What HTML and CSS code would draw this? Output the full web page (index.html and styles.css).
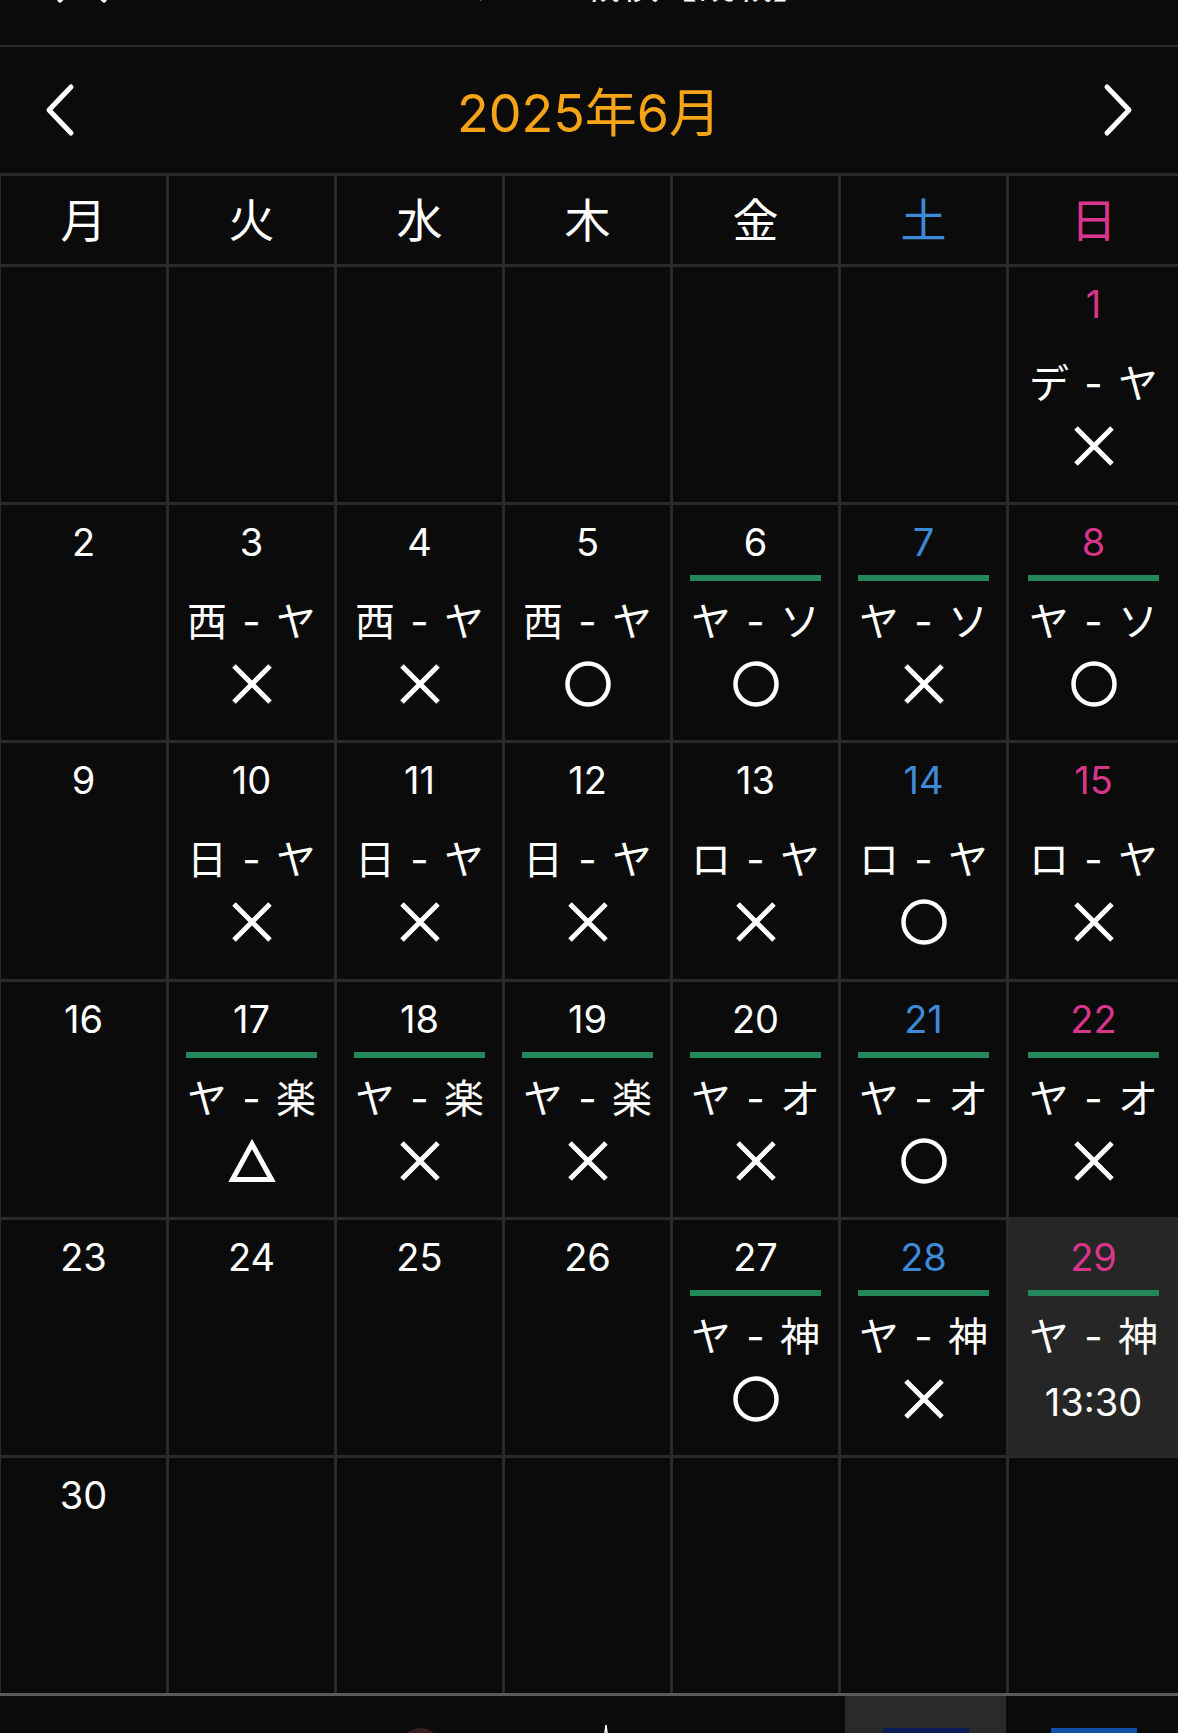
FILE: index.html
```html
<!DOCTYPE html>
<html lang="ja">
<head>
    <meta charset="UTF-8" />
    <meta name="viewport" content="width=device-width, initial-scale=1" />
    <title>観戦カレンダー</title>
    <link rel="stylesheet" href="styles.css">
</head>
<body>
    <div class="top-bar">
        <svg class="close-icon" width="52" height="52" viewBox="0 0 52 52">
            <path d="M4 4L48 48M48 4L4 48" stroke="#fff" stroke-width="5" stroke-linecap="round" />
        </svg>
        <span class="top-title">ヤクルト戦績【観戦】</span>
    </div>

    <div class="month-nav">
        <button class="nav-btn" aria-label="前の月">
            <svg width="31" height="54" viewBox="0 0 31 54">
                <path d="M27 4L5 27L27 50" fill="none" stroke="#fff" stroke-width="5" stroke-linecap="round" stroke-linejoin="round" />
            </svg>
        </button>
        <h1 class="month-title">2025年6月</h1>
        <button class="nav-btn" aria-label="次の月">
            <svg width="31" height="54" viewBox="0 0 31 54">
                <path d="M4 4L26 27L4 50" fill="none" stroke="#fff" stroke-width="5" stroke-linecap="round" stroke-linejoin="round" />
            </svg>
        </button>
    </div>

    <div class="calendar" id="calendar">
        <div class="weekday">月</div>
        <div class="weekday">火</div>
        <div class="weekday">水</div>
        <div class="weekday">木</div>
        <div class="weekday">金</div>
        <div class="weekday sat">土</div>
        <div class="weekday sun">日</div>
    </div>

    <div class="tab-bar">
        <div class="tab"></div>
        <div class="tab"></div>
        <div class="tab"><span class="tab-ball"></span></div>
        <div class="tab">
            <svg class="tab-pen" width="40" height="30" viewBox="0 0 40 30">
                <path d="M37 2L35.5 14M37 2L38.5 14" stroke="#fff" stroke-width="1.5" fill="none" />
            </svg>
        </div>
        <div class="tab"></div>
        <div class="tab active"><span class="tab-flag navy"></span></div>
        <div class="tab"><span class="tab-flag blue"></span></div>
    </div>

    <script>
        const marks = {
            x: '<svg width="42" height="42" viewBox="0 0 42 42"><path d="M3 3L39 39M39 3L3 39" stroke="#fff" stroke-width="5"/></svg>',
            o: '<svg width="46" height="46" viewBox="0 0 46 46"><circle cx="23" cy="23" r="20.5" fill="none" stroke="#fff" stroke-width="4.5"/></svg>',
            t: '<svg width="48" height="43" viewBox="0 0 48 43"><path d="M24 5L43.5 40.5H4.5Z" fill="none" stroke="#fff" stroke-width="5"/></svg>'
        };

        // June 2025 starts on a Sunday, grid starts on Monday
        const days = [
            { d: 1, vs: 'デ - ヤ', res: 'x' },
            { d: 2 },
            { d: 3, vs: '西 - ヤ', res: 'x' },
            { d: 4, vs: '西 - ヤ', res: 'x' },
            { d: 5, vs: '西 - ヤ', res: 'o' },
            { d: 6, vs: 'ヤ - ソ', res: 'o', home: true },
            { d: 7, vs: 'ヤ - ソ', res: 'x', home: true },
            { d: 8, vs: 'ヤ - ソ', res: 'o', home: true },
            { d: 9 },
            { d: 10, vs: '日 - ヤ', res: 'x' },
            { d: 11, vs: '日 - ヤ', res: 'x' },
            { d: 12, vs: '日 - ヤ', res: 'x' },
            { d: 13, vs: 'ロ - ヤ', res: 'x' },
            { d: 14, vs: 'ロ - ヤ', res: 'o' },
            { d: 15, vs: 'ロ - ヤ', res: 'x' },
            { d: 16 },
            { d: 17, vs: 'ヤ - 楽', res: 't', home: true },
            { d: 18, vs: 'ヤ - 楽', res: 'x', home: true },
            { d: 19, vs: 'ヤ - 楽', res: 'x', home: true },
            { d: 20, vs: 'ヤ - オ', res: 'x', home: true },
            { d: 21, vs: 'ヤ - オ', res: 'o', home: true },
            { d: 22, vs: 'ヤ - オ', res: 'x', home: true },
            { d: 23 },
            { d: 24 },
            { d: 25 },
            { d: 26 },
            { d: 27, vs: 'ヤ - 神', res: 'o', home: true },
            { d: 28, vs: 'ヤ - 神', res: 'x', home: true },
            { d: 29, vs: 'ヤ - 神', time: '13:30', home: true, today: true },
            { d: 30 }
        ];

        function addCell(calendar, day, col) {
            const cell = document.createElement('div');
            cell.className = 'cell';
            if (day && day.today) cell.classList.add('today');
            if (day) {
                const num = document.createElement('span');
                num.className = 'day';
                if (col === 5) num.classList.add('sat');
                if (col === 6) num.classList.add('sun');
                num.textContent = day.d;
                cell.appendChild(num);

                if (day.vs) {
                    const bar = document.createElement('span');
                    bar.className = day.home ? 'bar' : 'bar none';
                    cell.appendChild(bar);

                    const vs = document.createElement('span');
                    vs.className = 'match';
                    vs.textContent = day.vs;
                    cell.appendChild(vs);

                    const res = document.createElement('span');
                    if (day.time) {
                        res.className = 'time';
                        res.textContent = day.time;
                    } else {
                        res.className = 'mark';
                        res.innerHTML = marks[day.res];
                    }
                    cell.appendChild(res);
                }
            }
            calendar.appendChild(cell);
        }

        const calendar = document.getElementById('calendar');
        const cells = [0, 0, 0, 0, 0, 0].map(() => null).concat(days);
        while (cells.length < 42) cells.push(null);
        cells.forEach((day, i) => addCell(calendar, day, i % 7));
    </script>
</body>
</html>
```

FILE: styles.css
```css
body {
    margin: 0;
    background: #0b0b0b;
    color: #fff;
    font-family: Inter, "Noto Sans CJK JP", sans-serif;
    overflow: hidden;
}
.top-bar {
    height: 45px;
    border-bottom: 2px solid #2c2c2c;
    display: flex;
    align-items: flex-start;
    overflow: hidden;
}
.close-icon {
    margin: -48px 0 0 56px;
    flex-shrink: 0;
}
.top-title {
    margin: -36px 0 0 324px;
    font-size: 38px;
    line-height: 40px;
    white-space: nowrap;
}
.month-nav {
    height: 126px;
    display: flex;
    align-items: center;
    justify-content: space-between;
    padding: 0 44px;
}
.nav-btn {
    background: none;
    border: none;
    padding: 0;
    width: 31px;
    height: 54px;
    display: flex;
    cursor: pointer;
}
.month-title {
    margin: 0;
    padding-bottom: 2px;
    font-size: 52px;
    font-weight: 400;
    color: #f4a416;
}
.calendar {
    display: grid;
    grid-template-columns: repeat(6, 165px) 1fr;
    grid-template-rows: 88px repeat(6, 235.2px);
    gap: 3px;
    padding: 3px 0 0 1px;
    background: #2a2a2a;
}
.weekday {
    background: #0b0b0b;
    display: flex;
    align-items: center;
    justify-content: center;
    padding-bottom: 6px;
    font-size: 46px;
}
.sat {
    color: #3d8ad9;
}
.sun {
    color: #d9368b;
}
.cell {
    background: #0b0b0b;
    display: flex;
    flex-direction: column;
    align-items: center;
    padding-top: 15px;
}
.cell.today {
    background: #262626;
}
.day {
    font-size: 38px;
    line-height: 44px;
}
.bar {
    width: 131px;
    height: 6px;
    margin-top: 11px;
    background: #23895a;
}
.bar.none {
    background: transparent;
}
.match {
    font-size: 40px;
    line-height: 46px;
    margin: 18px 0 0 2px;
    letter-spacing: 2px;
    white-space: nowrap;
}
.mark {
    margin-top: 15px;
    height: 48px;
    display: flex;
    align-items: center;
    justify-content: center;
}
.time {
    margin-top: 18px;
    font-size: 38px;
    line-height: 48px;
}
.tab-bar {
    border-top: 3px solid #5a5a5a;
    display: grid;
    grid-template-columns: repeat(7, 1fr);
    height: 100px;
}
.tab {
    display: flex;
    justify-content: center;
    padding-top: 32px;
}
.tab.active {
    background: #2a2a2a;
    margin: 0 4px;
}
.tab-ball {
    width: 43px;
    height: 43px;
    border-radius: 50%;
    background: #3a1d1d;
}
.tab-pen {
    margin-top: -5px;
}
.tab-flag {
    width: 86px;
    height: 40px;
}
.tab-flag.navy {
    background: #0a1b55;
}
.tab-flag.blue {
    background: #1550a8;
}
```
